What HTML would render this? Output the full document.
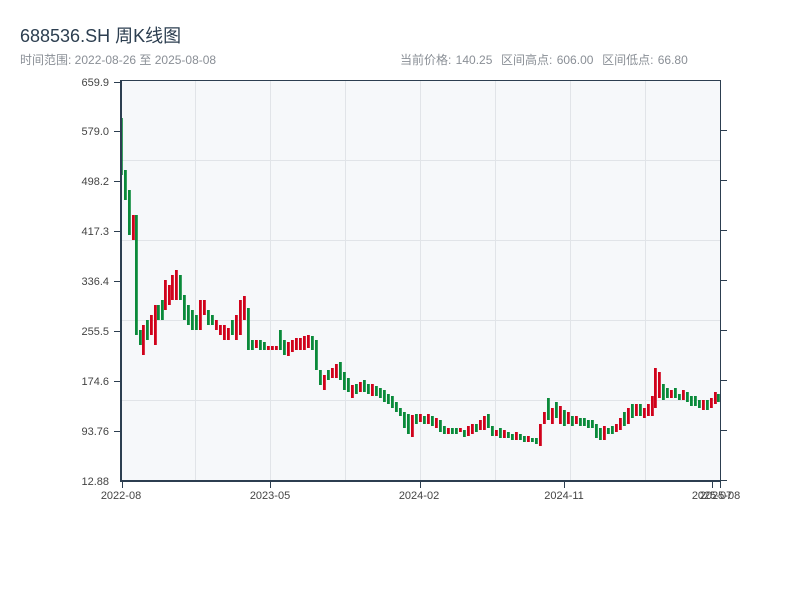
<!DOCTYPE html>
<html><head><meta charset="utf-8"><style>
html,body{margin:0;padding:0;background:#fff;width:800px;height:600px;overflow:hidden}
body{font-family:"Liberation Sans","Noto Sans CJK SC",sans-serif}
.t{position:absolute;left:20px;top:22px;font-size:18px;color:#2c3e50}
.s{position:absolute;left:20px;top:51px;font-size:12px;color:#8a8f96}
.r{position:absolute;left:400px;top:51px;font-size:12px;color:#8a8f96;word-spacing:1px}
svg{position:absolute;left:0;top:0}
</style></head><body>
<div class="t">688536.SH 周K线图</div>
<div class="s">时间范围: 2022-08-26 至 2025-08-08</div>
<div class="r">当前价格: 140.25 &nbsp;区间高点: 606.00 &nbsp;区间低点: 66.80</div>
<svg width="800" height="600" xmlns="http://www.w3.org/2000/svg" font-family="Liberation Sans, sans-serif" font-size="11" fill="#444">
<rect x="121" y="80" width="599" height="401" fill="#f6f8fa"/>
<g stroke="#e1e4e8" stroke-width="1">
<line x1="195.5" y1="80" x2="195.5" y2="481"/><line x1="270.5" y1="80" x2="270.5" y2="481"/><line x1="345.5" y1="80" x2="345.5" y2="481"/><line x1="420.5" y1="80" x2="420.5" y2="481"/><line x1="495.5" y1="80" x2="495.5" y2="481"/><line x1="570.5" y1="80" x2="570.5" y2="481"/><line x1="645.5" y1="80" x2="645.5" y2="481"/>
<line x1="121" y1="160.5" x2="720" y2="160.5"/><line x1="121" y1="240.5" x2="720" y2="240.5"/><line x1="121" y1="320.5" x2="720" y2="320.5"/><line x1="121" y1="400.5" x2="720" y2="400.5"/>
</g>
<g fill="#0a8a3a">
<rect x="120" y="118" width="2.8" height="57"/><rect x="124" y="170" width="2.8" height="30"/><rect x="128" y="190" width="2.8" height="45"/><rect x="135" y="215" width="2.8" height="120"/><rect x="139" y="330" width="2.8" height="15"/><rect x="146" y="320" width="2.8" height="20"/><rect x="157" y="305" width="2.8" height="15"/><rect x="161" y="300" width="2.8" height="20"/><rect x="179" y="275" width="2.8" height="25"/><rect x="183" y="295" width="2.8" height="25"/><rect x="187" y="305" width="2.8" height="20"/><rect x="191" y="310" width="2.8" height="20"/><rect x="195" y="315" width="2.8" height="15"/><rect x="207" y="310" width="2.8" height="15"/><rect x="211" y="315" width="2.8" height="10"/><rect x="231" y="320" width="2.8" height="15"/><rect x="247" y="308" width="2.8" height="42"/><rect x="251" y="340" width="2.8" height="10"/><rect x="259" y="340" width="2.8" height="10"/><rect x="263" y="342" width="2.8" height="8"/><rect x="279" y="330" width="2.8" height="20"/><rect x="283" y="340" width="2.8" height="15"/><rect x="311" y="336" width="2.8" height="14"/><rect x="315" y="340" width="2.8" height="30"/><rect x="319" y="370" width="2.8" height="15"/><rect x="327" y="370" width="2.8" height="10"/><rect x="339" y="362" width="2.8" height="18"/><rect x="343" y="372" width="2.8" height="18"/><rect x="347" y="378" width="2.8" height="14"/><rect x="355" y="384" width="2.8" height="10"/><rect x="363" y="380" width="2.8" height="12"/><rect x="367" y="384" width="2.8" height="10"/><rect x="375" y="386" width="2.8" height="10"/><rect x="379" y="388" width="2.8" height="10"/><rect x="383" y="390" width="2.8" height="12"/><rect x="387" y="394" width="2.8" height="10"/><rect x="391" y="396" width="2.8" height="12"/><rect x="395" y="402" width="2.8" height="10"/><rect x="399" y="408" width="2.8" height="8"/><rect x="403" y="412" width="2.8" height="16"/><rect x="407" y="414" width="2.8" height="20"/><rect x="415" y="414" width="2.8" height="10"/><rect x="423" y="416" width="2.8" height="8"/><rect x="431" y="416" width="2.8" height="10"/><rect x="439" y="420" width="2.8" height="12"/><rect x="443" y="426" width="2.8" height="8"/><rect x="451" y="428" width="2.8" height="6"/><rect x="455" y="428" width="2.8" height="6"/><rect x="463" y="430" width="2.8" height="7"/><rect x="475" y="424" width="2.8" height="8"/><rect x="487" y="414" width="2.8" height="14"/><rect x="491" y="426" width="2.8" height="10"/><rect x="499" y="428" width="2.8" height="10"/><rect x="507" y="432" width="2.8" height="6"/><rect x="511" y="434" width="2.8" height="6"/><rect x="519" y="434" width="2.8" height="6"/><rect x="523" y="436" width="2.8" height="6"/><rect x="531" y="438" width="2.8" height="4"/><rect x="535" y="438" width="2.8" height="6"/><rect x="547" y="398" width="2.8" height="22"/><rect x="555" y="402" width="2.8" height="16"/><rect x="563" y="410" width="2.8" height="16"/><rect x="571" y="416" width="2.8" height="10"/><rect x="579" y="418" width="2.8" height="8"/><rect x="583" y="418" width="2.8" height="8"/><rect x="587" y="420" width="2.8" height="8"/><rect x="591" y="420" width="2.8" height="8"/><rect x="595" y="424" width="2.8" height="14"/><rect x="599" y="428" width="2.8" height="12"/><rect x="607" y="428" width="2.8" height="6"/><rect x="611" y="426" width="2.8" height="8"/><rect x="623" y="412" width="2.8" height="14"/><rect x="631" y="404" width="2.8" height="14"/><rect x="639" y="404" width="2.8" height="12"/><rect x="662" y="384" width="2.8" height="16"/><rect x="666" y="388" width="2.8" height="10"/><rect x="674" y="388" width="2.8" height="10"/><rect x="678" y="394" width="2.8" height="6"/><rect x="686" y="392" width="2.8" height="10"/><rect x="690" y="396" width="2.8" height="10"/><rect x="694" y="396" width="2.8" height="10"/><rect x="698" y="400" width="2.8" height="8"/><rect x="706" y="400" width="2.8" height="10"/><rect x="717" y="394" width="2.8" height="8"/>
</g>
<g fill="#d0021b">
<rect x="132" y="215" width="2.8" height="25"/><rect x="142" y="325" width="2.8" height="30"/><rect x="150" y="315" width="2.8" height="20"/><rect x="154" y="305" width="2.8" height="40"/><rect x="164" y="280" width="2.8" height="30"/><rect x="168" y="285" width="2.8" height="20"/><rect x="171" y="275" width="2.8" height="25"/><rect x="175" y="270" width="2.8" height="30"/><rect x="199" y="300" width="2.8" height="30"/><rect x="203" y="300" width="2.8" height="15"/><rect x="215" y="320" width="2.8" height="10"/><rect x="219" y="325" width="2.8" height="10"/><rect x="223" y="325" width="2.8" height="15"/><rect x="227" y="328" width="2.8" height="12"/><rect x="235" y="315" width="2.8" height="25"/><rect x="239" y="300" width="2.8" height="35"/><rect x="243" y="296" width="2.8" height="24"/><rect x="255" y="340" width="2.8" height="8"/><rect x="267" y="346" width="2.8" height="4"/><rect x="271" y="346" width="2.8" height="4"/><rect x="275" y="346" width="2.8" height="4"/><rect x="287" y="342" width="2.8" height="14"/><rect x="291" y="340" width="2.8" height="12"/><rect x="295" y="338" width="2.8" height="12"/><rect x="299" y="338" width="2.8" height="12"/><rect x="303" y="336" width="2.8" height="14"/><rect x="307" y="335" width="2.8" height="13"/><rect x="323" y="375" width="2.8" height="15"/><rect x="331" y="368" width="2.8" height="10"/><rect x="335" y="364" width="2.8" height="14"/><rect x="351" y="385" width="2.8" height="13"/><rect x="359" y="382" width="2.8" height="10"/><rect x="371" y="384" width="2.8" height="12"/><rect x="411" y="415" width="2.8" height="22"/><rect x="419" y="414" width="2.8" height="8"/><rect x="427" y="414" width="2.8" height="10"/><rect x="435" y="418" width="2.8" height="10"/><rect x="447" y="428" width="2.8" height="6"/><rect x="459" y="428" width="2.8" height="4"/><rect x="467" y="426" width="2.8" height="10"/><rect x="471" y="424" width="2.8" height="10"/><rect x="479" y="420" width="2.8" height="10"/><rect x="483" y="416" width="2.8" height="14"/><rect x="495" y="430" width="2.8" height="6"/><rect x="503" y="430" width="2.8" height="8"/><rect x="515" y="432" width="2.8" height="8"/><rect x="527" y="436" width="2.8" height="6"/><rect x="539" y="424" width="2.8" height="22"/><rect x="543" y="412" width="2.8" height="12"/><rect x="551" y="408" width="2.8" height="16"/><rect x="559" y="406" width="2.8" height="18"/><rect x="567" y="412" width="2.8" height="12"/><rect x="575" y="416" width="2.8" height="8"/><rect x="603" y="426" width="2.8" height="14"/><rect x="615" y="424" width="2.8" height="8"/><rect x="619" y="418" width="2.8" height="12"/><rect x="627" y="408" width="2.8" height="16"/><rect x="635" y="404" width="2.8" height="12"/><rect x="643" y="408" width="2.8" height="10"/><rect x="647" y="404" width="2.8" height="12"/><rect x="651" y="396" width="2.8" height="20"/><rect x="654" y="368" width="2.8" height="40"/><rect x="658" y="372" width="2.8" height="26"/><rect x="670" y="390" width="2.8" height="8"/><rect x="682" y="390" width="2.8" height="10"/><rect x="702" y="400" width="2.8" height="10"/><rect x="710" y="398" width="2.8" height="10"/><rect x="714" y="392" width="2.8" height="12"/>
</g>
<g stroke="#2c3e50" stroke-width="1">
<line x1="121" y1="80.5" x2="720" y2="80.5"/>
<line x1="720.5" y1="80" x2="720.5" y2="482"/>
<line x1="114" y1="82.5" x2="121" y2="82.5"/><line x1="114" y1="131.5" x2="121" y2="131.5"/><line x1="114" y1="181.5" x2="121" y2="181.5"/><line x1="114" y1="231.5" x2="121" y2="231.5"/><line x1="114" y1="281.5" x2="121" y2="281.5"/><line x1="114" y1="331.5" x2="121" y2="331.5"/><line x1="114" y1="381.5" x2="121" y2="381.5"/><line x1="114" y1="431.5" x2="121" y2="431.5"/>
<line x1="720" y1="130.5" x2="727" y2="130.5"/><line x1="720" y1="180.5" x2="727" y2="180.5"/><line x1="720" y1="230.5" x2="727" y2="230.5"/><line x1="720" y1="280.5" x2="727" y2="280.5"/><line x1="720" y1="330.5" x2="727" y2="330.5"/><line x1="720" y1="380.5" x2="727" y2="380.5"/><line x1="720" y1="430.5" x2="727" y2="430.5"/><line x1="720" y1="480.5" x2="727" y2="480.5"/>
<line x1="122.5" y1="481" x2="122.5" y2="488"/><line x1="270.5" y1="481" x2="270.5" y2="488"/><line x1="420.5" y1="481" x2="420.5" y2="488"/><line x1="564.5" y1="481" x2="564.5" y2="488"/><line x1="712.5" y1="481" x2="712.5" y2="488"/><line x1="720.5" y1="481" x2="720.5" y2="488"/>
</g>
<line x1="121" y1="80" x2="121" y2="482" stroke="#2c3e50" stroke-width="2"/>
<line x1="120" y1="481" x2="721" y2="481" stroke="#2c3e50" stroke-width="2"/>
<g text-anchor="end">
<text x="109" y="86">659.9</text><text x="109" y="135">579.0</text><text x="109" y="185">498.2</text><text x="109" y="235">417.3</text><text x="109" y="285">336.4</text><text x="109" y="335">255.5</text><text x="109" y="385">174.6</text><text x="109" y="435">93.76</text><text x="109" y="485">12.88</text>
</g>
<g text-anchor="middle">
<text x="121" y="499">2022-08</text><text x="270" y="499">2023-05</text><text x="419" y="499">2024-02</text><text x="564" y="499">2024-11</text><text x="712" y="499">2025-07</text><text x="720" y="499">2025-08</text>
</g>
</svg>
</body></html>
